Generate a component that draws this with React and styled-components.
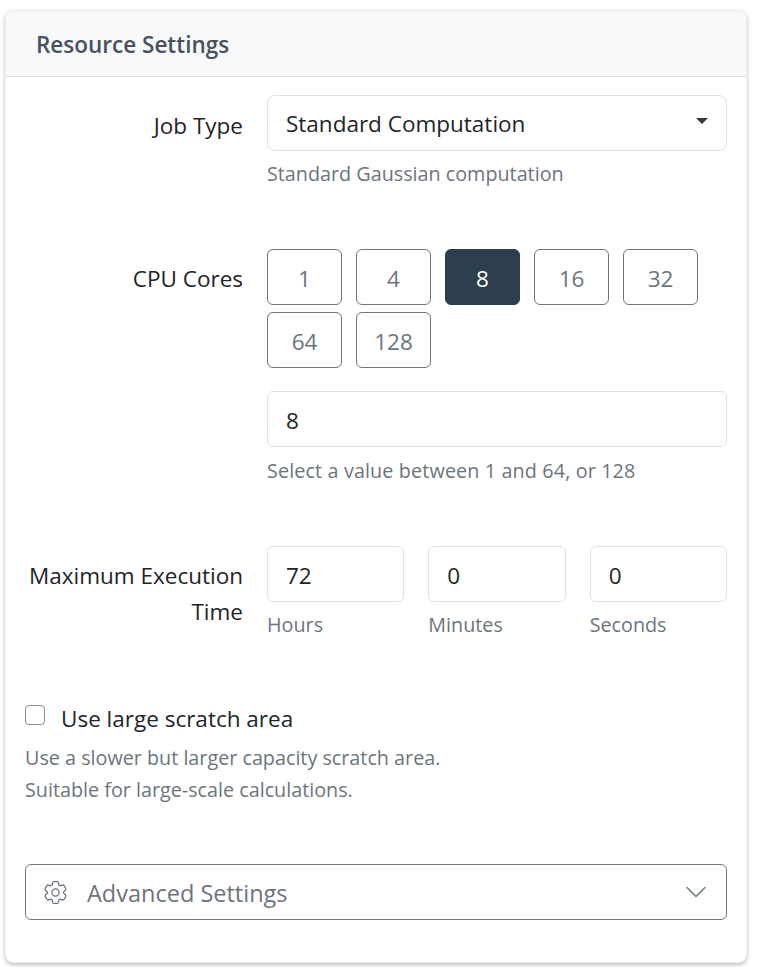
import styled, { createGlobalStyle } from "styled-components";
import { BsChevronDown } from "react-icons/bs";
import { HiOutlineCog6Tooth } from "react-icons/hi2";

const GlobalStyle = createGlobalStyle`
  html, body {
    margin: 0;
    padding: 0;
    background: #fff;
  }
  body {
    font-family: "Open Sans", "Noto Sans", sans-serif;
    color: #212529;
  }
`;

const Page = styled.div`
  padding: 10px 10px 4px 5px;
`;

const Card = styled.section`
  border: 1px solid #eceef0;
  border-radius: 8px;
  background: #fff;
  box-shadow: 0 2px 4px rgba(0, 0, 0, 0.25);
  height: 953px;
  box-sizing: border-box;
  overflow: hidden;
`;

const CardHeader = styled.header`
  height: 66px;
  box-sizing: border-box;
  background: #f8f9fa;
  border-bottom: 1px solid #dee2e6;
  padding: 2px 30px 0;
  display: flex;
  align-items: center;
  font-size: 22.5px;
  font-weight: 600;
  color: #46535f;
`;

const CardBody = styled.div`
  padding: 18px 19px 0;
`;

const Row = styled.div`
  display: grid;
  grid-template-columns: 218px 460px;
  column-gap: 24px;
  margin-bottom: ${(p) => p.$gap}px;
`;

const Label = styled.label`
  text-align: right;
  font-size: 22.5px;
  line-height: 36px;
  padding-top: ${(p) => p.$top}px;
`;

const SelectBox = styled.div`
  height: 56px;
  box-sizing: border-box;
  border: 1px solid #dee2e6;
  border-radius: 8px;
  display: flex;
  align-items: center;
  justify-content: space-between;
  padding: 1px 18px 0;
  font-size: 22.5px;
`;

const Caret = styled.span`
  width: 0;
  height: 0;
  border-left: 6px solid transparent;
  border-right: 6px solid transparent;
  border-top: 6px solid #343a40;
  margin-top: -5px;
`;

const Help = styled.div`
  font-size: 19.75px;
  line-height: 32px;
  color: #6c757d;
  margin-top: ${(p) => p.$top}px;
  letter-spacing: ${(p) => p.$spacing || 0}px;
`;

const CoreGrid = styled.div`
  display: flex;
  flex-wrap: wrap;
  gap: 7px 14px;
  width: 440px;
  margin-bottom: 23px;
`;

const CoreButton = styled.button`
  width: 75px;
  height: 56px;
  box-sizing: border-box;
  border-radius: 6px;
  border: 1px solid ${(p) => (p.$active ? "#2c3e50" : "#6c757d")};
  background: ${(p) => (p.$active ? "#2c3e50" : "#fff")};
  color: ${(p) => (p.$active ? "#fff" : "#6c757d")};
  font-family: inherit;
  font-size: 22.5px;
  padding: 2px 0 0;
`;

const TextInput = styled.div`
  height: 56px;
  box-sizing: border-box;
  border: 1px solid #dee2e6;
  border-radius: 6px;
  padding: 2px 18px 0;
  display: flex;
  align-items: center;
  font-size: 22.5px;
`;

const TimeGrid = styled.div`
  display: grid;
  grid-template-columns: repeat(3, 1fr);
  column-gap: 24px;
`;

const TimeHint = styled.div`
  font-size: 19.75px;
  line-height: 32px;
  color: #6c757d;
  margin-top: 7px;
`;

const CheckRow = styled.div`
  display: flex;
  align-items: center;
  gap: 16px;
  height: 36px;
  font-size: 22.5px;
`;

const CheckBox = styled.span`
  width: 20px;
  height: 20px;
  box-sizing: border-box;
  border: 1.5px solid #8a8f94;
  border-radius: 4px;
  margin-top: -6px;
`;

const Note = styled.p`
  margin: 6px 0 0;
  font-size: 19.75px;
  line-height: 32px;
  color: #6c757d;
`;

const AdvancedButton = styled.button`
  width: 100%;
  height: 56px;
  box-sizing: border-box;
  margin-top: 58px;
  border: 1px solid #6c757d;
  border-radius: 6px;
  background: #fff;
  color: #6c757d;
  font-family: inherit;
  font-size: 23.5px;
  display: flex;
  align-items: center;
  padding: 0 18px 0 15px;
  gap: 17px;
`;

const ButtonText = styled.span`
  flex: 1;
  text-align: left;
  padding-top: 2px;
`;

export default function App() {
  const cores = [1, 4, 8, 16, 32, 64, 128];
  return (
    <Page>
      <GlobalStyle />
      <Card>
        <CardHeader>Resource Settings</CardHeader>
        <CardBody>
          <Row $gap={59}>
            <Label $top={13}>Job Type</Label>
            <div>
              <SelectBox>
                Standard Computation
                <Caret />
              </SelectBox>
              <Help $top={7}>Standard Gaussian computation</Help>
            </div>
          </Row>
          <Row $gap={59}>
            <Label $top={12}>CPU Cores</Label>
            <div>
              <CoreGrid>
                {cores.map((c) => (
                  <CoreButton key={c} $active={c === 8}>
                    {c}
                  </CoreButton>
                ))}
              </CoreGrid>
              <TextInput>8</TextInput>
              <Help $top={8} $spacing={0.13}>
                Select a value between 1 and 64, or 128
              </Help>
            </div>
          </Row>
          <Row $gap={59}>
            <Label $top={12}>Maximum Execution Time</Label>
            <TimeGrid>
              <div>
                <TextInput>72</TextInput>
                <TimeHint>Hours</TimeHint>
              </div>
              <div>
                <TextInput>0</TextInput>
                <TimeHint>Minutes</TimeHint>
              </div>
              <div>
                <TextInput>0</TextInput>
                <TimeHint>Seconds</TimeHint>
              </div>
            </TimeGrid>
          </Row>
          <CheckRow>
            <CheckBox />
            Use large scratch area
          </CheckRow>
          <Note>
            Use a slower but larger capacity scratch area.
            <br />
            Suitable for large-scale calculations.
          </Note>
          <AdvancedButton>
            <HiOutlineCog6Tooth size={29} strokeWidth={1.05} />
            <ButtonText>Advanced Settings</ButtonText>
            <BsChevronDown size={24} />
          </AdvancedButton>
        </CardBody>
      </Card>
    </Page>
  );
}
